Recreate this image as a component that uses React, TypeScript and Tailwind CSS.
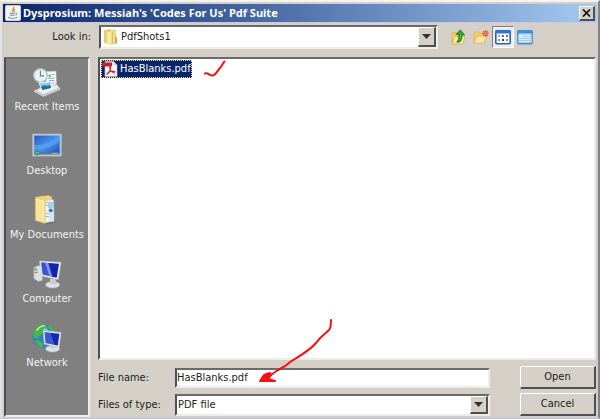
import { ReactNode } from 'react';
import clsx from 'clsx';

const SUNKEN =
  'border-2 border-t-[#6a6a68] border-l-[#505050] border-r-[#eeece6] border-b-[#eeece6]';
const RAISED =
  'border-t border-l border-r-2 border-b-2 border-t-white border-l-white border-r-[#505050] border-b-[#505050] bg-[#d4d0c8]';

function JavaIcon() {
  return (
    <svg className="size-4" viewBox="0 0 16 16" fill="none" aria-hidden="true">
      <rect x="0.5" y="0.5" width="15" height="15" rx="1" fill="#f4f4f2" stroke="#c9ced8" />
      <path d="M8.6 1.5c1.5 2-2.6 2.8-.7 5.5M10 4c-1.6 1-.8 1.7-.9 3" stroke="#e58b2c" strokeWidth="1.2" />
      <path d="M4.500 8.300h5.500M5 10.200h4.500M10.500 8.200c2-.6 2 1.600 0 2M3 12.200c1.500 1.600 7.500 1.400 9.500 0" stroke="#5f8098" strokeWidth="0.900" />
    </svg>
  );
}

function CloseIcon() {
  return (
    <svg className="h-2 w-[9px]" viewBox="0 0 9 8" aria-hidden="true">
      <path d="M1 0.5l7 7M8 0.5l-7 7" stroke="#111" strokeWidth="1.7" />
    </svg>
  );
}

function FolderIcon() {
  return (
    <svg className="size-4" viewBox="0 0 16 16" aria-hidden="true">
      <path d="M1.500 1.500l5-1v14l-5-1z" fill="#ecd36a" stroke="#d8b94d" strokeWidth="0.6" />
      <path d="M6.500 1l6 .5v13l-6 1z" fill="#f4e083" stroke="#d9bb50" strokeWidth="0.6" />
      <path d="M4.500 2.500l3 1.500v11.500l-3-1.500z" fill="#fff2b4" />
      <path d="M9.500 2.500v12" stroke="#dfc257" />
      <path d="M12 7.500l2 .5v6.500l-2 .3z" fill="#d5b74e" />
      <path d="M13 10.500v3" stroke="#6db4d8" />
    </svg>
  );
}

function UpFolderIcon() {
  return (
    <svg className="size-4" viewBox="0 0 16 16" aria-hidden="true">
      <path d="M1 4.5l1-1.2h3l1 1.2h5V15H1z" fill="#f2cf6b" stroke="#d7a83f" strokeWidth="0.7" />
      <path d="M1.2 15l2.3-7.5H14L12 15z" fill="#fbe9a0" stroke="#dcb251" strokeWidth="0.8" />
      <path
        d="M6 13.500c4.500 0 5.200-3 4.800-7.500H13.800L9.300 .8 4.800 5.500H7.500c.5 3.500.2 5.500-1.500 6.500z"
        fill="#2c9a2c"
        stroke="#176b1d"
        strokeWidth="0.6"
      />
      <path d="M9.200 3.500c.6 3 .4 6-1 8" stroke="#58bd4b" fill="none" />
    </svg>
  );
}

function NewFolderIcon() {
  return (
    <svg className="size-4" viewBox="0 0 16 16" aria-hidden="true">
      <path d="M1 13.500V4l1-1h4l1 1.500h5v9z" fill="#f2cf6b" stroke="#dba94a" strokeWidth="0.7" />
      <path d="M1.300 14l2.500-7h10l-2.500 7z" fill="#fbe8a0" stroke="#dfb55a" strokeWidth="0.8" />
      <path d="M12.500 1v7M9 4.500h7M10 2l5 5M15 2l-5 5" stroke="#f0623a" strokeWidth="1.100" />
      <circle cx="12.500" cy="4.500" r="1.600" fill="#ff9b6a" stroke="#e8452c" />
    </svg>
  );
}

function ListViewIcon() {
  return (
    <svg className="size-4" viewBox="0 0 16 16" aria-hidden="true">
      <rect x="0.800" y="1.800" width="14.400" height="13" rx="1" fill="#fff" stroke="#1c62cf" strokeWidth="1.600" />
      <path d="M0.500 1.500h15v3H.5z" fill="#2b78dd" />
      <path d="M3 6h2v2H3z" fill="#9aa6c0" />
      <path d="M7 6h2v2H7z" fill="#5c6fae" />
      <path d="M11 6h2v2h-2z" fill="#2f9a50" />
      <path d="M3 10h2v2H3z" fill="#d67d68" />
      <path d="M7 10h2v2H7z" fill="#1f3b94" />
      <path d="M11 10h2v2h-2z" fill="#b98a24" />
    </svg>
  );
}

function DetailsViewIcon() {
  return (
    <svg className="size-4" viewBox="0 0 16 16" aria-hidden="true">
      <rect x="0.800" y="1.800" width="14.400" height="13" rx="1" fill="#e4f0fb" stroke="#3f92e2" strokeWidth="1.400" />
      <path d="M.5 1.500h15v4H.5z" fill="#3b91e6" />
      <path d="M1.500 5h13" stroke="#d4e9fb" />
      <path d="M5 7.500h9M2 9.500h12M2 11.500h12M2 13.500h12" stroke="#a3c6e6" />
      <path d="M5.500 7v7M8.500 7v7M11.500 7v7" stroke="#c3dcf2" strokeWidth="0.700" />
    </svg>
  );
}

function PdfIcon() {
  return (
    <svg className="size-4" viewBox="0 0 16 16" aria-hidden="true">
      <path d="M3 0.500h8.500L15 4v11.500H3z" fill="#fbf6f5" stroke="#c8b5b5" strokeWidth="0.700" />
      <path d="M11.500.5V4H15z" fill="#d9cbcb" />
      <path d="M0 1.500h10v4H0z" fill="#c3222c" />
      <path
        d="M4.500 13.500c2-1 4.500-5 4-7.200-.2-.8-1-.6-.8.5.5 2.500 2.800 5 5.300 5.200M5.500 12c2-1.500 4.500-2.200 7.500-1.500"
        fill="none"
        stroke="#c3222c"
        strokeWidth="1.100"
      />
    </svg>
  );
}

function RecentItemsIcon() {
  return (
    <svg className="size-8" viewBox="0 0 32 32" aria-hidden="true">
      <path d="M2 26l10 5.500 18-7.500-3-5-18 3z" fill="#eceeee" stroke="#b9bdbd" strokeWidth="0.600" />
      <path d="M2 26l10 5.500V29L3 24zM12 31.500l18-7.500v-2.500L12 29z" fill="#c6caca" />
      <path d="M14 5l11.500-.5L26 18l-10 5z" fill="#f7fafa" stroke="#cfd6d8" strokeWidth="0.600" />
      <path d="M16 9h4M21 8h3M17 12h7M18 14.500h6M21 17h3" stroke="#8ba8b2" />
      <path d="M18 8h2v3h-2z" fill="#79bd69" />
      <circle cx="9" cy="9" r="7.300" fill="#e9f1f4" stroke="#a9b8be" strokeWidth="1.300" />
      <path d="M9 4v5.500h4" stroke="#66808c" fill="none" strokeWidth="1.200" />
      <path d="M7 16.500l13.500-1.500 1 8.500-11 2.500z" fill="#f8fbfc" />
      <path d="M8.500 17.500l11-1.200.6 6-9 2z" fill="#54b7e9" />
      <path d="M9.500 21.500l4-2 3 1 3-1 .6 3-9 2z" fill="#246f9a" />
      <path d="M10 18.500l8-.8" stroke="#c4edff" />
    </svg>
  );
}

function DesktopIcon() {
  return (
    <svg className="size-8" viewBox="0 0 32 32" aria-hidden="true">
      <defs>
        <linearGradient id="desk" x1="0" y1="0" x2="1" y2="1">
          <stop offset="0" stopColor="#2858bd" />
          <stop offset="0.500" stopColor="#4794ee" />
          <stop offset="1" stopColor="#2253bd" />
        </linearGradient>
      </defs>
      <rect x="1" y="3.500" width="30" height="23" fill="#a4bdd4" stroke="#c8d1d9" />
      <rect x="2.500" y="5" width="27" height="18.500" fill="url(#desk)" />
      <path d="M2.500 15C12 16 22 12 29.500 5v6c-8 7-17 9-27 8z" fill="#7bb8fa" opacity="0.350" />
      <path d="M2.500 22.500h27V25h-27z" fill="#4d7793" />
      <circle cx="5.500" cy="23.500" r="2.600" fill="#268bb0" />
      <path d="M4 22.500h1.500V24H4z" fill="#f39b3c" />
      <path d="M6 22.500h1.500V24H6z" fill="#96d25a" />
      <path d="M21 24h7" stroke="#91b6c8" />
    </svg>
  );
}

function DocumentsIcon() {
  return (
    <svg className="size-8" viewBox="0 0 32 32" aria-hidden="true">
      <path d="M21 28l6 1-11 2.500-3-1z" fill="#5e5e5e" opacity="0.500" />
      <path d="M3.500 2L17 .5 21 2v26l-9 2z" fill="#e2c366" />
      <path d="M11 6l12-1 .5 23-10 1.500z" fill="#eef5fa" stroke="#aabac3" strokeWidth="0.500" />
      <path d="M14 8h7M14 11h7M14 20h6M14 23h6" stroke="#9ab8cc" />
      <path d="M17 8l6-1v7h-6z" fill="#a9d0e4" />
      <circle cx="20" cy="16.500" r="2.200" fill="#318ca7" />
      <path d="M18.500 19l5-1v10h-5z" fill="#d5e4ee" />
      <path d="M3.500 2.500L14 6v24.500L3.500 27z" fill="#f8e59b" stroke="#d5b658" strokeWidth="0.700" />
      <path d="M6 5l6 2v21" stroke="#fff4be" fill="none" />
      <path d="M4 2.300L18 .5l3 1.500v3l-7 1z" fill="#efd67e" />
    </svg>
  );
}

function Monitor() {
  return (
    <>
      <ellipse cx="22" cy="27.500" rx="7.500" ry="3.500" fill="#dfe2e4" stroke="#aeb4b8" strokeWidth="0.600" />
      <path d="M19 21h6l1 6h-6z" fill="#c7cccf" />
    </>
  );
}

function ComputerIcon() {
  return (
    <svg className="size-8" viewBox="0 0 32 32" aria-hidden="true">
      <path d="M2 9l5-2 4 1v15l-4 1-5-3z" fill="#dce0e2" stroke="#9fa5a8" strokeWidth="0.600" />
      <path d="M3 12l3-.5M3 14.500l3-.5" stroke="#68706f" />
      <path d="M2.500 9.500h2v2h-2z" fill="#43c944" />
      <Monitor />
      <path d="M8 2l23 1.500L28 22 10 18z" fill="#eceff1" stroke="#b4bbc0" strokeWidth="0.600" />
      <path d="M9.800 3.800l19 1.200-2.500 15-14.800-3.400z" fill="#1224ae" />
      <path d="M9.800 3.800l8 .5 4 14.700-10.300-2.400z" fill="#5f7eea" opacity="0.500" />
      <path d="M14 4l3 .2 4.500 14.700-3-.7z" fill="#adc7fc" opacity="0.600" />
    </svg>
  );
}

function NetworkIcon() {
  return (
    <svg className="size-8" viewBox="0 0 32 32" aria-hidden="true">
      <circle cx="13" cy="14" r="12.500" fill="#2d84c8" />
      <path
        d="M2 8c3-5 8-7 12-6l3 3-4 3-1 4-4 1-2 4-5-2zM3 18l5 1 4 4-2 3c-3-1-6-4-7-8zM18 2c4 2 6 5 7 9l-5-2-3-4z"
        fill="#46b645"
      />
      <path d="M5 8c2-3 5-5 9-5" stroke="#baf09c" strokeWidth="1.500" fill="none" />
      <path d="M12 7c2-1 4 0 5 2" stroke="#7dc9f6" strokeWidth="2" fill="none" />
      <Monitor />
      <path d="M12 8l19 2-2 16-16-3.500z" fill="#e8edf2" stroke="#b4bbc0" strokeWidth="0.600" />
      <path d="M13.500 9.800l15.700 1.700-1.700 12.500-13-2.800z" fill="#1429b0" />
      <path d="M13.500 9.800l6 .7 4.500 12.700-9.500-2z" fill="#6889ed" opacity="0.500" />
    </svg>
  );
}

const places: { label: string; icon: ReactNode }[] = [
  { label: 'Recent Items', icon: <RecentItemsIcon /> },
  { label: 'Desktop', icon: <DesktopIcon /> },
  { label: 'My Documents', icon: <DocumentsIcon /> },
  { label: 'Computer', icon: <ComputerIcon /> },
  { label: 'Network', icon: <NetworkIcon /> },
];

function Dropdown({
  id,
  value,
  icon,
  className,
}: {
  id: string;
  value: string;
  icon?: ReactNode;
  className?: string;
}) {
  return (
    <div className={clsx('relative min-w-0 flex-1 bg-white', SUNKEN, className)}>
      {icon && <span className="pointer-events-none absolute inset-y-0 left-0.5 flex items-center">{icon}</span>}
      <select
        id={id}
        className={clsx('block size-full appearance-none bg-white pr-5 outline-none', icon ? 'pl-5' : 'pl-px')}
      >
        <option>{value}</option>
      </select>
      <span
        className={clsx(
          'pointer-events-none absolute inset-y-0 right-0 flex w-[18px] items-center justify-center',
          RAISED
        )}
      >
        <svg className="h-[5px] w-[9px]" viewBox="0 0 9 5" aria-hidden="true">
          <path d="M0 0h9L4.500 5z" fill="#333" />
        </svg>
      </span>
    </div>
  );
}

function ToolButton({ label, active, children }: { label: string; active?: boolean; children: ReactNode }) {
  return (
    <button
      type="button"
      aria-label={label}
      className={clsx(
        'flex size-[22px] items-center justify-center border',
        active ? 'border-t-[#808080] border-l-[#808080] border-r-white border-b-white bg-[#f0eeea]' : 'border-transparent'
      )}
    >
      {children}
    </button>
  );
}

export default function App() {
  return (
    <div className="relative flex min-h-screen flex-col border-t-2 border-r-2 border-b-2 border-l-2 border-t-[#f4f3f0] border-r-[#85827c] border-b-[#c9c6d8] border-l-[#e4e1da] bg-[#d4d0c8] px-px pt-0.5 font-['DejaVu_Sans_Condensed','DejaVu_Sans',sans-serif] text-[11px] leading-4 text-[#1c1c1c]">
      <header className="flex h-[18px] items-center gap-0.5 bg-linear-to-r from-[#0a246a] to-[#a6caf0] px-0.5">
        <JavaIcon />
        <h1 className="flex-1 truncate font-['Noto_Sans','Open_Sans',sans-serif] text-[11px] font-bold text-white">
          Dysprosium: Messiah's 'Codes For Us' Pdf Suite
        </h1>
        <button type="button" aria-label="Close" className={clsx('flex h-[15px] w-4 items-center justify-center', RAISED)}>
          <CloseIcon />
        </button>
      </header>

      <div className="flex flex-1 flex-col border border-b-0 border-[#c8c8ee]">
        <div className="flex items-center pt-0.5 pr-[60px]">
          <label htmlFor="look-in" className="w-[95px] pr-2 text-right">
            Look in:
          </label>
          <Dropdown id="look-in" value="PdfShots1" icon={<FolderIcon />} className="h-6" />
          <div className="flex pl-2.5">
            <ToolButton label="Up one level">
              <UpFolderIcon />
            </ToolButton>
            <ToolButton label="Create new folder">
              <NewFolderIcon />
            </ToolButton>
            <ToolButton label="List" active>
              <ListViewIcon />
            </ToolButton>
            <ToolButton label="Details">
              <DetailsViewIcon />
            </ToolButton>
          </div>
        </div>

        <div className="flex flex-1 gap-2 pt-2">
          <nav className={clsx('flex w-[86px] shrink-0 flex-col gap-4 bg-[#808080] pt-2', SUNKEN)}>
            {places.map((place) => (
              <button
                key={place.label}
                type="button"
                className="flex h-12 flex-col items-center gap-0.5 whitespace-nowrap text-[#f2f2f2]"
              >
                {place.icon}
                {place.label}
              </button>
            ))}
          </nav>

          <main className="flex min-w-0 flex-1 flex-col">
            <ul className={clsx('flex-1 bg-white p-px', SUNKEN)}>
              <li className="flex">
                <button
                  type="button"
                  className="flex h-[18px] items-center gap-0.5 border border-dotted border-[#e8d98a] bg-[#0a246a] text-white"
                >
                  <PdfIcon />
                  HasBlanks.pdf
                </button>
              </li>
            </ul>

            <form className="flex flex-col gap-1 pt-1.5 pb-px" onSubmit={(e) => e.preventDefault()}>
              <div className="flex items-center">
                <label htmlFor="file-name" className="w-[77px]">
                  File name:
                </label>
                <input
                  id="file-name"
                  type="text"
                  defaultValue="HasBlanks.pdf"
                  className={clsx('h-5 min-w-0 flex-1 bg-white outline-none', SUNKEN)}
                />
                <button type="submit" className={clsx('ml-[30px] h-[23px] w-[76px]', RAISED)}>
                  Open
                </button>
              </div>
              <div className="flex items-center">
                <label htmlFor="file-type" className="w-[77px]">
                  Files of type:
                </label>
                <Dropdown id="file-type" value="PDF file" className="h-[22px]" />
                <button type="button" className={clsx('ml-[30px] h-[23px] w-[76px]', RAISED)}>
                  Cancel
                </button>
              </div>
            </form>
          </main>
        </div>
      </div>

      {/* red pen marks drawn over the dialog */}
      <svg
        className="pointer-events-none absolute top-[58px] left-[202px] h-5 w-6"
        viewBox="0 0 24 20"
        fill="none"
        aria-hidden="true"
      >
        <path
          d="M1 13.500c3-1.500 4 2.500 8 2C12 15 13 11 16 8c2-2 3-5 4.500-6.500"
          stroke="#fa1010"
          strokeWidth="2"
          strokeLinecap="round"
        />
      </svg>
      <svg
        className="pointer-events-none absolute bottom-8 left-[256px] h-[68px] w-20"
        viewBox="0 0 80 68"
        fill="none"
        aria-hidden="true"
      >
        <path
          d="M73 3c0 4 0 8-2 10-4 4-8 6-13 13-7 8-16 13-26 19-4 4-8 6-12 8-5 3-9 7-14 11"
          stroke="#fa1010"
          strokeWidth="2"
          strokeLinecap="round"
        />
        <path
          d="M12 56l-6 2-4 6h15l-7-2 3-4z"
          fill="#fa1010"
          stroke="#fa1010"
          strokeWidth="2"
          strokeLinecap="round"
          strokeLinejoin="round"
        />
      </svg>
    </div>
  );
}
